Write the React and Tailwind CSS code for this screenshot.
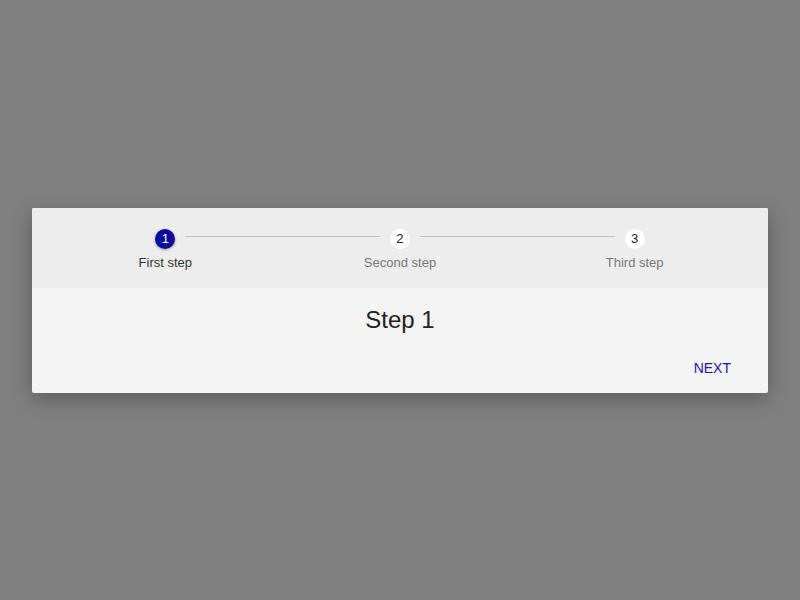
const steps = ['First step', 'Second step', 'Third step'];

const Step = ({ index, label, active }) => (
  <div className="relative flex flex-col items-center">
    {index > 0 && (
      <div className="absolute top-[7px] left-[calc(-50%+20px)] right-[calc(50%+20px)] h-px bg-[#bdbdbd]" />
    )}
    <div
      className={
        active
          ? 'flex h-5 w-5 items-center justify-center rounded-full bg-[#100a9c] text-[13px] text-white shadow-[0_1px_3px_rgba(0,0,0,0.35)]'
          : 'flex h-5 w-5 items-center justify-center rounded-full bg-white text-[13px] text-[#222]'
      }
    >
      {index + 1}
    </div>
    <div className={`mt-[6px] text-[13px] leading-4 ${active ? 'text-[#333]' : 'text-[#777]'}`}>
      {label}
    </div>
  </div>
);

export default function App() {
  return (
    <div
      className="flex h-[600px] w-[800px] items-start bg-[#808080] px-8 pt-[208px]"
      style={{ fontFamily: '"Liberation Sans", Arial, sans-serif' }}
    >
      <div className="w-full overflow-hidden rounded-[2px] bg-[#f4f4f4] shadow-[0_6px_20px_rgba(0,0,0,0.3)]">
        <div className="grid h-20 grid-cols-3 bg-[#ededed] px-4 pt-[21px]">
          {steps.map((label, i) => (
            <Step key={label} index={i} label={label} active={i === 0} />
          ))}
        </div>
        <div className="flex flex-col">
          <h2 className="pt-[18px] text-center text-2xl leading-7 text-[#222]">Step 1</h2>
          <div className="flex justify-end px-[29px] pt-[20px] pb-[11px]">
            <button className="px-2 py-[6px] text-sm leading-4 text-[#2213b3]">NEXT</button>
          </div>
        </div>
      </div>
    </div>
  );
}
